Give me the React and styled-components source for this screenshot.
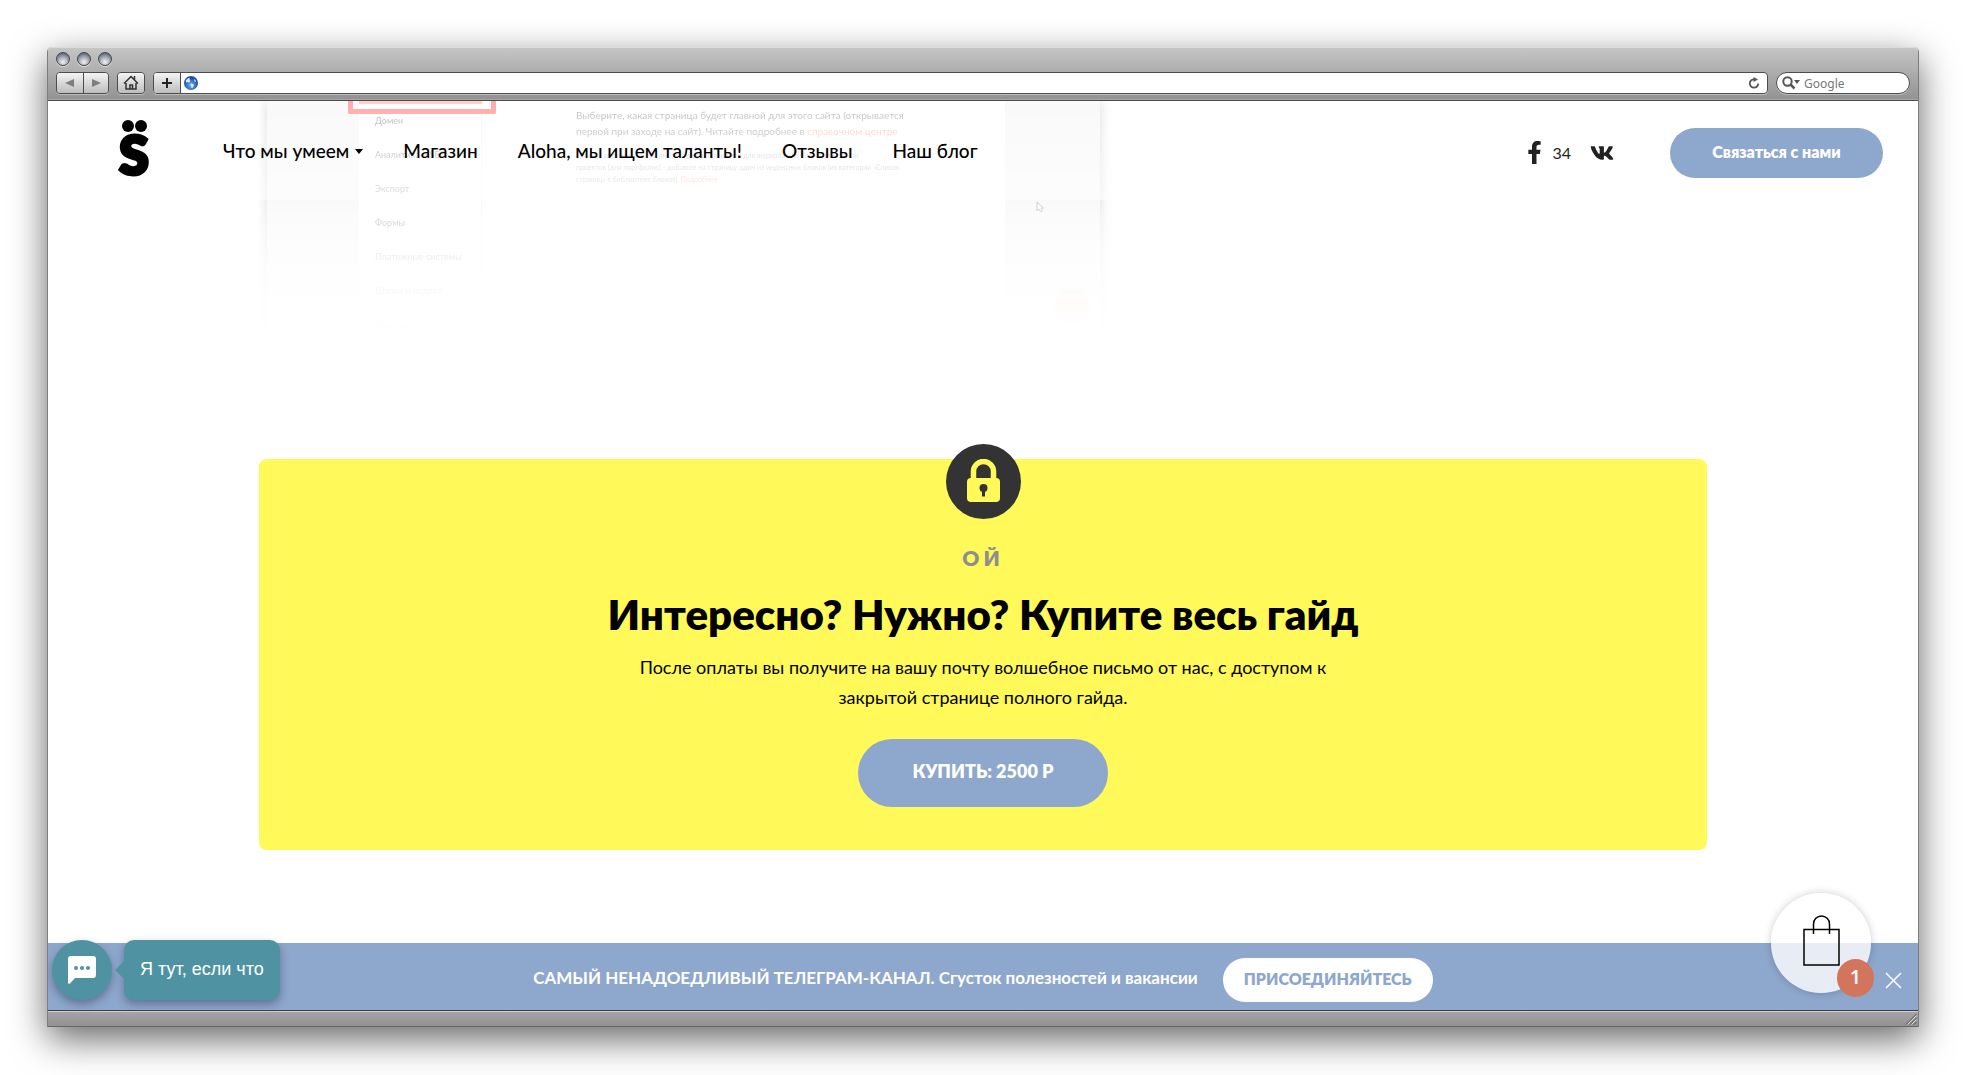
import styled, { createGlobalStyle, css } from "styled-components"
import { FaFacebookF, FaVk } from "react-icons/fa"

const GlobalStyle = createGlobalStyle`
  *, *::before, *::after {
    box-sizing: border-box;
  }
  body {
    margin: 0;
    background: #fff;
    font-family: Lato, "Open Sans", sans-serif;
    color: #000;
  }
  button, input {
    font-family: inherit;
    margin: 0;
  }
  a {
    color: inherit;
    text-decoration: none;
  }
`

const blue = "#8ea7cd"
const teal = "#4f93a3"

const Desktop = styled.div`
  display: flex;
  min-height: 100vh;
  padding: 47px 47px 48px;
  overflow: hidden;
`

const BrowserWindow = styled.div`
  flex: 1;
  display: flex;
  flex-direction: column;
  min-width: 0;
  border: solid #7d7d7d;
  border-width: 0 1px;
  border-radius: 5px 5px 0 0;
  box-shadow: 0 12px 36px rgba(0, 0, 0, 0.6);
`

/* browser chrome */

const Toolbar = styled.div`
  display: flex;
  flex-direction: column;
  gap: 6px;
  padding: 5px 8px 6px 8px;
  background: linear-gradient(#c6c6c6, #929292);
  border-bottom: 1px solid #4a4a4a;
  border-radius: 4px 4px 0 0;
  box-shadow: inset 0 1px 0 #dcdcdc, inset 0 -1px 0 #a8a8a8;
`

const Lights = styled.div`
  display: flex;
  gap: 7px;
`

const Light = styled.button`
  width: 14px;
  height: 14px;
  padding: 0;
  border: 1px solid #44484f;
  border-radius: 50%;
  background: radial-gradient(circle at 50% 75%, #f2f2f4 0, #b9bcc4 35%, #5c6470 85%);
  box-shadow: 0 1px 0 #dedede;
`

const Controls = styled.div`
  display: flex;
  gap: 8px;
  height: 22px;
`

const ButtonGroup = styled.div`
  display: flex;
  border: 1px solid #4c4c4c;
  border-radius: 4px;
  overflow: hidden;
  box-shadow: 0 1px 0 #bcbcbc;
`

const ToolButton = styled.button`
  display: flex;
  align-items: center;
  justify-content: center;
  width: 26px;
  padding: 0;
  border: 0;
  background: linear-gradient(#f4f4f4, #bdbdbd);
  & + & {
    width: 25px;
    border-left: 1px solid #4c4c4c;
  }
`

const AddressBar = styled(ButtonGroup)`
  flex: 1;
  align-items: stretch;
  background: #fff;
`

const AddressField = styled.label`
  flex: 1;
  display: flex;
  align-items: center;
  gap: 6px;
  padding: 0 7px 0 3px;
  border-left: 1px solid #4c4c4c;
`

const TextInput = styled.input`
  flex: 1;
  min-width: 0;
  padding: 0;
  border: 0;
  outline: 0;
  background: none;
  font: 12px "Noto Sans", sans-serif;
  &::placeholder {
    color: #777;
    opacity: 1;
  }
`

const PlainButton = styled.button`
  display: flex;
  padding: 0;
  border: 0;
  background: none;
  color: inherit;
`

const SearchField = styled.label`
  display: flex;
  align-items: center;
  gap: 4px;
  width: 134px;
  padding: 0 12px 0 5px;
  border: 1px solid #4c4c4c;
  border-radius: 11px;
  background: #fff;
  box-shadow: 0 1px 0 #bcbcbc;
`

const StatusBar = styled.div`
  display: flex;
  justify-content: flex-end;
  align-items: flex-end;
  height: 17px;
  padding: 0 1px 1px;
  border-top: 1px solid #3a3f48;
  border-bottom: 1px solid #666;
  background: linear-gradient(#a5a5a5, #929292);
  box-shadow: inset 0 1px 0 #cfcfcf;
`

/* site */

const Viewport = styled.div`
  position: relative;
  flex: 1;
  display: flex;
  flex-direction: column;
  overflow: hidden;
  background: #fff;
`

const Header = styled.header`
  position: absolute;
  top: 0;
  left: 0;
  right: 0;
  z-index: 2;
  display: flex;
  align-items: center;
  height: 99px;
  padding: 4px 35px 0 66px;
  background: rgba(255, 255, 255, 0.5);
`

const Logo = styled.a`
  display: flex;
  margin-right: 69px;
`

const Nav = styled.nav`
  display: flex;
  gap: 40px;
  padding-bottom: 3px;
  font-size: 19px;
  font-weight: 500;
  line-height: 24px;
`

const NavLink = styled.a`
  display: flex;
  align-items: center;
  gap: 6px;
  white-space: nowrap;
`

const Social = styled.div`
  display: flex;
  align-items: center;
  gap: 19px;
  margin: 0 56px 0 auto;
  color: #222;
`

const SocialLink = styled.a`
  display: flex;
  align-items: center;
  gap: 6px;
  font-size: 16px;
  line-height: 24px;
`

const PillButton = styled.button`
  border: 0;
  background: ${blue};
  color: #fff;
  font-weight: 800;
  white-space: nowrap;
  ${(props) =>
    props.$size === "header" &&
    css`
      min-width: 213px;
      height: 50px;
      padding-bottom: 3px;
      border-radius: 25px;
      font-size: 16px;
    `}
  ${(props) =>
    props.$size === "buy" &&
    css`
      min-width: 250px;
      height: 68px;
      padding-bottom: 6px;
      border-radius: 34px;
      font-size: 18px;
    `}
  ${(props) =>
    props.$size === "join" &&
    css`
      min-width: 210px;
      height: 44px;
      padding-bottom: 4px;
      border-radius: 22px;
      background: #fff;
      color: ${blue};
      font-size: 16px;
    `}
`

const Main = styled.main`
  flex: 1;
  width: 100%;
  max-width: 1448px;
  margin: 0 auto;
`

const Preview = styled.section`
  display: flex;
  padding: 0 10px 0 8px;
  height: 240px;
  mask-image: linear-gradient(
    rgba(0, 0, 0, 0.9) 0,
    rgba(0, 0, 0, 0.4) 100px,
    rgba(0, 0, 0, 0.25) 122px,
    rgba(0, 0, 0, 0.12) 155px,
    rgba(0, 0, 0, 0.05) 190px,
    rgba(0, 0, 0, 0.02) 222px,
    transparent 240px
  );
`

const Screen = styled.div`
  position: relative;
  flex: 0 1 833px;
  display: flex;
  background: #fff;
  box-shadow: 0 0 12px rgba(0, 0, 0, 0.35);
`

const Strip = styled.div`
  flex: 0 0 ${(props) => props.$width}px;
  height: 196px;
  background: #f1f1f1;
`

const Menu = styled.ul`
  flex: 0 0 123px;
  margin: 0;
  padding: 3px 0 0 16px;
  border-right: 1px solid #eee;
  list-style: none;
  font-size: 9px;
  line-height: 34px;
  color: #666;
`

const Hint = styled.div`
  flex: 1;
  padding: 6px 0 0 94px;
`

const HintText = styled.p`
  margin: 0 0 10px;
  font-size: ${(props) => (props.$small ? 7 : 10)}px;
  line-height: ${(props) => (props.$small ? 12 : 16)}px;
  color: ${(props) => (props.$small ? "#a5a5a5" : "#777")};
  white-space: nowrap;
  a {
    color: #ff9d82;
  }
`

const Marker = styled.div`
  position: absolute;
  top: 0;
  left: 81px;
  width: 148px;
  height: 13px;
  padding: 0 9px 0 6px;
  border: 5px solid #ff4444;
  border-top: 0;
  border-radius: 0 0 2px 2px;
  &::before {
    content: "";
    display: block;
    height: 3px;
    background: #ff9880;
  }
`

const Cursor = styled.svg`
  position: absolute;
  top: 100px;
  left: 769px;
`

const HelpDot = styled.div`
  position: absolute;
  top: 188px;
  left: 787px;
  width: 36px;
  height: 36px;
  border-radius: 50%;
  background: #ffb5a5;
`

const BuyCard = styled.section`
  display: flex;
  flex-direction: column;
  align-items: center;
  margin: 118px 0 0;
  padding: 0 24px 43px;
  border-radius: 8px;
  background: #fff959;
  text-align: center;
`

const LockBadge = styled.div`
  display: flex;
  align-items: center;
  justify-content: center;
  width: 75px;
  height: 75px;
  margin: -15px 0 27px;
  padding-bottom: 3px;
  border-radius: 50%;
  background: #333;
`

const Eyebrow = styled.p`
  margin: 0 0 18px;
  font-size: 21px;
  font-weight: 800;
  line-height: 24px;
  letter-spacing: 4px;
  color: #8e8e8e;
`

const Title = styled.h2`
  margin: 0 0 12px;
  font-size: 42px;
  font-weight: 800;
  line-height: 52px;
`

const Text = styled.p`
  max-width: 700px;
  margin: 0 0 27px;
  font-size: 18px;
  line-height: 30px;
`

const Banner = styled.div`
  display: grid;
  grid-template-columns: 1fr auto 1fr;
  align-items: center;
  padding: 15px 16px 8px;
  background: ${blue};
  color: #fff;
`

const BannerBody = styled.div`
  grid-column: 2;
  display: flex;
  align-items: center;
  gap: 25px;
`

const BannerText = styled.p`
  margin: 0;
  padding-bottom: 4px;
  font-size: 17px;
  font-weight: 700;
  line-height: 24px;
`

const CloseButton = styled(PlainButton)`
  justify-self: end;
`

const Chat = styled.div`
  position: absolute;
  left: 4px;
  bottom: 10px;
  z-index: 3;
  display: flex;
  gap: 12px;
`

const ChatButton = styled.button`
  display: flex;
  align-items: center;
  justify-content: center;
  width: 60px;
  height: 60px;
  padding: 0;
  border: 0;
  border-radius: 50%;
  background: ${teal};
  box-shadow: 0 4px 8px rgba(40, 50, 80, 0.45);
`

const ChatBubble = styled.div`
  position: relative;
  padding: 0 16px;
  border-radius: 10px;
  background: ${teal};
  box-shadow: 0 4px 8px rgba(40, 50, 80, 0.45);
  color: #fff;
  font: 18px/58px "Liberation Sans", Arial, sans-serif;
  white-space: nowrap;
  &::before {
    content: "";
    position: absolute;
    top: 21px;
    left: -9px;
    border: solid transparent;
    border-width: 9px 9px 9px 0;
    border-right-color: ${teal};
  }
`

const CartButton = styled.button`
  position: absolute;
  right: 47px;
  bottom: 17px;
  z-index: 3;
  display: flex;
  align-items: center;
  justify-content: center;
  width: 100px;
  height: 100px;
  padding: 0 0 6px;
  border: 0;
  border-radius: 50%;
  background: rgba(255, 255, 255, 0.8);
  box-shadow: 0 0 8px rgba(0, 0, 0, 0.2);
`

const CartCount = styled.span`
  position: absolute;
  right: -3px;
  bottom: -4px;
  width: 37px;
  height: 38px;
  border-radius: 19px;
  background: #d3755d;
  color: #fff;
  font: 600 20px/36px "Open Sans", sans-serif;
`

const links = ["Магазин", "Aloha, мы ищем таланты!", "Отзывы", "Наш блог"]
const menu = ["Домен", "Аналитика и SEO", "Экспорт", "Формы", "Платежные системы", "Шапка и подвал", "Доступы"]

function Chrome() {
  return (
    <Toolbar>
      <Lights>
        <Light aria-label="Close" />
        <Light aria-label="Minimize" />
        <Light aria-label="Zoom" />
      </Lights>
      <Controls>
        <ButtonGroup>
          <ToolButton aria-label="Back">
            <svg width="10" height="10"><path d="M9 1v8L0 5z" fill="#7e7e7e" /></svg>
          </ToolButton>
          <ToolButton aria-label="Forward">
            <svg width="10" height="10"><path d="M1 1v8l9-4z" fill="#7e7e7e" /></svg>
          </ToolButton>
        </ButtonGroup>
        <ButtonGroup>
          <ToolButton aria-label="Home">
            <svg width="16" height="16" fill="none" stroke="#333" strokeWidth="1.5">
              <path d="M1 8.500 8 1.500l7 7M3 8v6h10V8M11.500 1v4M7 14v-4h2.500v4" />
            </svg>
          </ToolButton>
        </ButtonGroup>
        <AddressBar>
          <ToolButton aria-label="Add bookmark">
            <svg width="12" height="12"><path d="M6 1v10M1 6h10" stroke="#222" strokeWidth="2" /></svg>
          </ToolButton>
          <AddressField>
            <svg width="14" height="14" viewBox="0 0 14 14">
              <defs>
                <radialGradient id="globe" cx="50%" cy="65%">
                  <stop offset="0" stopColor="#6cb6f5" />
                  <stop offset="1" stopColor="#1b4ea6" />
                </radialGradient>
              </defs>
              <circle cx="7" cy="7" r="7" fill="url(#globe)" />
              <path d="M2 4l2.500-2 1.500.5-.5 1.500 1 1L5 6.500 3 6 2 7zM6 7.500l3 .5 1 1-1.500 3L7.500 12 7 10zM10 3l1.500 1 .5 2-1.500-.5z" fill="#d8ecfc" />
            </svg>
            <TextInput aria-label="Address" />
            <PlainButton aria-label="Reload">
              <svg width="12" height="12" viewBox="0 0 12 12">
                <path d="M10.200 6.500a4.200 4.200 0 1 1-4-4.200" fill="none" stroke="#555" strokeWidth="1.800" />
                <path d="M5.500 0v5L10 2.500z" fill="#555" />
              </svg>
            </PlainButton>
          </AddressField>
        </AddressBar>
        <SearchField>
          <svg width="18" height="14" viewBox="0 0 18 14">
            <circle cx="5.500" cy="5.500" r="4.200" fill="none" stroke="#555" strokeWidth="2" />
            <path d="M8.500 8.500l4 4" stroke="#555" strokeWidth="2.500" />
            <path d="M12 4h6l-3 4z" fill="#555" />
          </svg>
          <TextInput aria-label="Search" placeholder="Google" />
        </SearchField>
      </Controls>
    </Toolbar>
  )
}

function SiteHeader() {
  return (
    <Header>
      <Logo href="#" aria-label="Home page">
        <svg width="40" height="76" viewBox="0 0 40 76">
          <circle cx="14" cy="11" r="6" />
          <circle cx="27" cy="11" r="6" />
          <text x="20" y="60" textAnchor="middle" fontFamily="Lato" fontWeight="800" fontSize="54" stroke="#000" strokeWidth="3">S</text>
        </svg>
      </Logo>
      <Nav>
        <NavLink href="#">
          Что мы умеем
          <svg width="8" height="5"><path d="M0 0h8L4 5z" /></svg>
        </NavLink>
        {links.map((link) => (
          <NavLink href="#" key={link}>{link}</NavLink>
        ))}
      </Nav>
      <Social>
        <SocialLink href="#" aria-label="Facebook 34">
          <FaFacebookF size={23} />
          34
        </SocialLink>
        <SocialLink href="#" aria-label="VK">
          <FaVk size={24} />
        </SocialLink>
      </Social>
      <PillButton $size="header">Связаться с нами</PillButton>
    </Header>
  )
}

function SettingsPreview() {
  return (
    <Preview>
      <Screen>
        <Strip $width={92} />
        <Menu>
          {menu.map((item) => (
            <li key={item}>{item}</li>
          ))}
        </Menu>
        <Hint>
          <HintText>
            Выберите, какая страница будет главной для этого сайта (открывается<br />
            первой при заходе на сайт). Читайте подробнее в <a href="#">справочном центре</a>
          </HintText>
          <HintText $small>
            Если вы хотите вывести список страниц (например для журнала или блога) или список<br />
            проектов (для портфолио) - добавьте на страницу один из индексных блоков (из категории «Список<br />
            страниц» в библиотеке блоков). <a href="#">Подробнее</a>
          </HintText>
        </Hint>
        <Strip $width={95} />
        <Marker />
        <Cursor width="8" height="12" fill="#fff" stroke="#777">
          <path d="M1 1v9l2-2 2 3 1.500-1L5 7h2.500z" />
        </Cursor>
        <HelpDot />
      </Screen>
    </Preview>
  )
}

export default function App() {
  return (
    <Desktop>
      <GlobalStyle />
      <BrowserWindow>
        <Chrome />
        <Viewport>
          <SiteHeader />
          <Main>
            <SettingsPreview />
            <BuyCard>
              <LockBadge>
                <svg width="33" height="43" viewBox="0 0 33 43">
                  <path d="M6.500 21V12.500a10 10 0 0 1 20 0V21" fill="none" stroke="#fff959" strokeWidth="5.500" />
                  <rect y="19" width="33" height="24" rx="4" fill="#fff959" />
                  <circle cx="16.500" cy="29" r="4" fill="#333" />
                  <path d="M15 30h3v7.500h-3z" fill="#333" />
                </svg>
              </LockBadge>
              <Eyebrow>ОЙ</Eyebrow>
              <Title>Интересно? Нужно? Купите весь гайд</Title>
              <Text>
                После оплаты вы получите на вашу почту волшебное письмо от нас, с доступом к закрытой странице полного гайда.
              </Text>
              <PillButton $size="buy">КУПИТЬ: 2500 Р</PillButton>
            </BuyCard>
          </Main>
          <Banner>
            <BannerBody>
              <BannerText>САМЫЙ НЕНАДОЕДЛИВЫЙ ТЕЛЕГРАМ-КАНАЛ. Сгусток полезностей и вакансии</BannerText>
              <PillButton $size="join">ПРИСОЕДИНЯЙТЕСЬ</PillButton>
            </BannerBody>
            <CloseButton aria-label="Закрыть">
              <svg width="17" height="17"><path d="M1 1l15 15M16 1L1 16" stroke="#fff" strokeWidth="1.500" /></svg>
            </CloseButton>
          </Banner>
          <Chat>
            <ChatButton aria-label="Чат">
              <svg width="30" height="30" viewBox="0 0 30 30">
                <path d="M4 1h22a3 3 0 0 1 3 3v16a3 3 0 0 1-3 3H8l-5 5.500q-2 1-2-1V4a3 3 0 0 1 3-3z" fill="#fff" />
                <circle cx="9" cy="13" r="2" fill={teal} />
                <circle cx="15" cy="13" r="2" fill={teal} />
                <circle cx="21" cy="13" r="2" fill={teal} />
              </svg>
            </ChatButton>
            <ChatBubble>Я тут, если что</ChatBubble>
          </Chat>
          <CartButton aria-label="Корзина, товаров: 1">
            <svg width="37" height="51" fill="none" stroke="#000" strokeWidth="1.500">
              <path d="M1 14.500h35V50H1zM10.500 19V9a8 8 0 0 1 16 0v10" />
            </svg>
            <CartCount>1</CartCount>
          </CartButton>
        </Viewport>
        <StatusBar>
          <svg width="12" height="12" stroke="#555">
            <path d="M1 11.500 11.500 1M5 11.500l6.500-6.500M9 11.500l2.500-2.500" />
            <path d="M2.500 11.500l9-9M6.500 11.500l5-5" stroke="#d8d8d8" />
          </svg>
        </StatusBar>
      </BrowserWindow>
    </Desktop>
  )
}
